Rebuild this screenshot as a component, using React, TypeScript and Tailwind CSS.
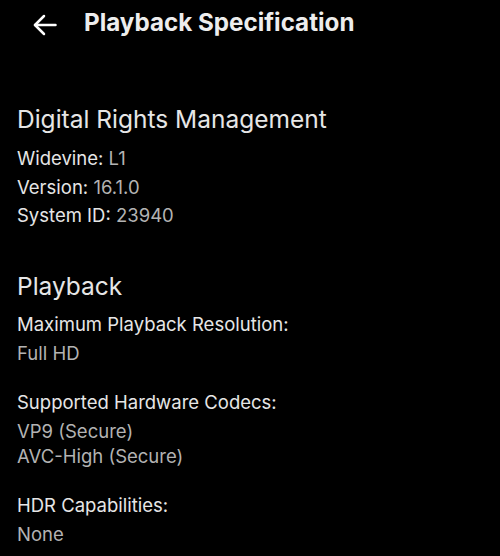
const font = { fontFamily: "Inter, 'Noto Sans', sans-serif" };

function Row({ label, value }: { label: string; value: string }) {
  return (
    <div className="leading-[28.5px] text-[18.5px] text-[#e6e6e6]">
      {label} <span className="text-[#b3b3b3]">{value}</span>
    </div>
  );
}

function Block({ label, values }: { label: string; values: string[] }) {
  return (
    <div className="text-[18.5px]">
      <div className="leading-[25px] mb-[4px] text-[#e6e6e6]">{label}</div>
      {values.map((v) => (
        <div key={v} className="leading-[25px] text-[#b3b3b3]">
          {v}
        </div>
      ))}
    </div>
  );
}

export default function App() {
  return (
    <div className="w-[500px] h-[556px] bg-black overflow-hidden" style={font}>
      <header className="h-[44px] flex items-center">
        <svg
          className="ml-[33px] mt-[5px] shrink-0"
          width="24"
          height="22"
          viewBox="0 0 24 22"
          fill="none"
          stroke="#fff"
          strokeWidth="2.5"
          strokeLinecap="round"
          strokeLinejoin="round"
        >
          <path d="M22.5 11H2" />
          <path d="M11 2L2 11L11 20" />
        </svg>
        <h1 className="ml-[27px] mt-[2px] text-[24.2px] font-bold text-[#ededed]">
          Playback Specification
        </h1>
      </header>

      <section className="px-[17px] mt-[59px]">
        <h2 className="text-[24.5px] leading-[32px] text-[#e6e6e6] mb-[9px]">
          Digital Rights Management
        </h2>
        <Row label="Widevine:" value="L1" />
        <Row label="Version:" value="16.1.0" />
        <Row label="System ID:" value="23940" />
      </section>

      <section className="px-[17px] mt-[40px]">
        <h2 className="text-[24.5px] leading-[32px] text-[#e6e6e6] mb-[10px]">Playback</h2>
        <div className="flex flex-col gap-[24px]">
          <Block label="Maximum Playback Resolution:" values={["Full HD"]} />
          <Block label="Supported Hardware Codecs:" values={["VP9 (Secure)", "AVC-High (Secure)"]} />
          <Block label="HDR Capabilities:" values={["None"]} />
        </div>
      </section>
    </div>
  );
}
